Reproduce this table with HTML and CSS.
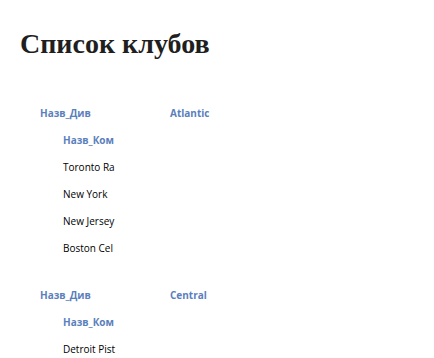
FILE: index.html
```html
<!DOCTYPE html>
<html>
<head>
<meta charset="utf-8">
<link rel="stylesheet" href="styles.css">
</head>
<body>
<div class="report">
  <h1 class="title">Список клубов</h1>
  <div class="groups">
    <section class="group">
      <div class="line head">
        <span class="label">Назв_Див</span>
        <span class="value">Atlantic</span>
      </div>
      <div class="line sub"><span class="label">Назв_Ком</span></div>
      <div class="line item"><span class="cell">Toronto Ra</span></div>
      <div class="line item"><span class="cell">New York</span></div>
      <div class="line item"><span class="cell">New Jersey</span></div>
      <div class="line item"><span class="cell">Boston Cel</span></div>
    </section>
    <section class="group">
      <div class="line head">
        <span class="label">Назв_Див</span>
        <span class="value">Central</span>
      </div>
      <div class="line sub"><span class="label">Назв_Ком</span></div>
      <div class="line item"><span class="cell">Detroit Pist</span></div>
    </section>
  </div>
</div>
</body>
</html>
```

FILE: styles.css
```css
html, body {
  margin: 0;
  padding: 0;
  background: #ffffff;
}
.report {
  width: 434px;
  height: 358px;
  overflow: hidden;
  font-family: "Open Sans", "Liberation Sans", sans-serif;
  font-size: 10px;
}
.title {
  margin: 0;
  padding: 26px 0 0 20px;
  height: 74px;
  box-sizing: border-box;
  font-family: "Liberation Serif", serif;
  font-size: 28px;
  line-height: 36px;
  font-weight: bold;
  color: #1f1f1f;
}
.groups {
  display: flex;
  flex-direction: column;
  gap: 21px;
  padding-top: 26px;
}
.group {
  display: flex;
  flex-direction: column;
}
.line {
  height: 27px;
  display: flex;
  align-items: center;
}
.head {
  height: 26px;
}
.head .label {
  margin-left: 40px;
  width: 130px;
}
.label, .value {
  color: #5b7fbd;
  font-weight: bold;
}
.sub .label {
  margin-left: 63px;
}
.cell {
  margin-left: 63px;
  white-space: nowrap;
  color: #000000;
}
```
